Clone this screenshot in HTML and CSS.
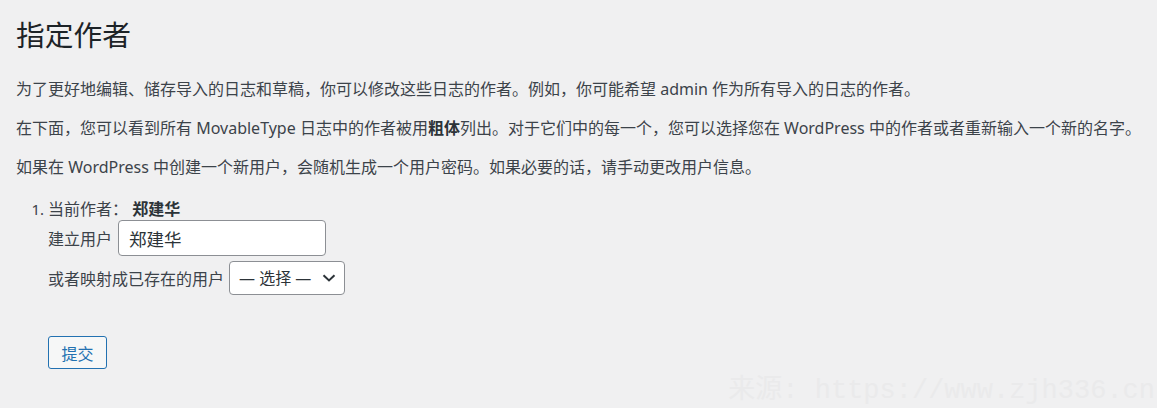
FILE: index.html
```html
<!DOCTYPE html>
<html lang="zh-CN">
<head>
    <meta charset="UTF-8">
    <meta name="viewport" content="width=device-width, initial-scale=1.0">
    <title>指定作者</title>
    <link rel="stylesheet" href="styles.css">
</head>
<body>
    <div class="wrap">
        <h2 class="page-title">指定作者</h2>
        <p>为了更好地编辑、储存导入的日志和草稿，你可以修改这些日志的作者。例如，你可能希望 admin 作为所有导入的日志的作者。</p>
        <p>在下面，您可以看到所有 MovableType 日志中的作者被用<strong>粗体</strong>列出。对于它们中的每一个，您可以选择您在 WordPress 中的作者或者重新输入一个新的名字。</p>
        <p>如果在 WordPress 中创建一个新用户，会随机生成一个用户密码。如果必要的话，请手动更改用户信息。</p>

        <form class="author-form">
            <ol class="authors">
                <li>
                    <div class="row-current">当前作者： <strong>郑建华</strong></div>
                    <div class="row">
                        <label for="user_1">建立用户</label>
                        <input type="text" id="user_1" class="text-input" value="郑建华" maxlength="30">
                    </div>
                    <div class="row row-map">
                        <label for="userselect_1">或者映射成已存在的用户</label>
                        <span class="select-wrap">
                            <select id="userselect_1" class="select-input">
                                <option>— 选择 —</option>
                            </select>
                            <svg class="chevron" width="14" height="8" viewBox="0 0 14 8"><path d="M1.5 1.2 L7 6.4 L12.5 1.2" fill="none" stroke="#2c3338" stroke-width="2"/></svg>
                        </span>
                    </div>
                </li>
            </ol>
            <p class="submit"><button type="button" class="button">提交</button></p>
        </form>
    </div>

    <div class="watermark">来源: https://www.zjh336.cn</div>
</body>
</html>
```

FILE: styles.css
```css
body {
    margin: 0;
    padding: 0;
    background-color: #f0f0f1;
    color: #3c434a;
    font-family: "Noto Sans", "Noto Sans CJK SC", sans-serif;
    font-size: 16px;
    overflow: hidden;
}

.wrap {
    padding: 16px 6px 0 16px;
}

.page-title {
    margin: 0;
    font-size: 28.75px;
    font-weight: 400;
    line-height: 37px;
    color: #1d2327;
}

.wrap p {
    margin: 15px 0;
    line-height: 24px;
    white-space: nowrap;
}

.wrap p:first-of-type {
    margin-top: 24px;
}

.wrap strong {
    font-weight: 700;
    color: #2c3338;
}

.authors {
    margin: 19px 0 0;
    padding-left: 32px;
}

.authors li::marker {
    font-size: 15px;
}

.row {
    display: flex;
    align-items: center;
}

.row label {
    margin-right: 6px;
}

.row-current {
    line-height: 22px;
    margin-top: 3px;
}

.row-map {
    margin-top: 5px;
}

.text-input {
    box-sizing: border-box;
    width: 208px;
    height: 36px;
    margin: 0;
    padding: 0 10px;
    border: 1px solid #8c8f94;
    border-radius: 4px;
    background-color: #fff;
    color: #2c3338;
    font-family: inherit;
    font-size: 17.5px;
}

.select-wrap {
    position: relative;
    display: inline-block;
    margin-left: -1px;
}

.select-input {
    box-sizing: border-box;
    width: 116px;
    height: 34px;
    margin: 0;
    padding: 0 30px 0 9px;
    border: 1px solid #8c8f94;
    border-radius: 4px;
    background-color: #fff;
    color: #2c3338;
    font-family: inherit;
    font-size: 16px;
    appearance: none;
    -webkit-appearance: none;
}

.chevron {
    position: absolute;
    right: 9px;
    top: 13px;
    pointer-events: none;
}

.wrap p.submit {
    margin: 41px 0 0 32px;
}

.button {
    box-sizing: border-box;
    width: 59px;
    height: 33px;
    padding: 0;
    border: 1px solid #2271b1;
    border-radius: 3px;
    background-color: #f6f7f7;
    color: #2271b1;
    font-family: inherit;
    font-size: 16px;
    cursor: pointer;
}

.watermark {
    position: absolute;
    right: 2px;
    bottom: 2px;
    font-family: "Liberation Mono", "Noto Sans CJK SC", monospace;
    font-size: 27px;
    line-height: 30px;
    color: #eaeaeb;
    white-space: nowrap;
}
```
